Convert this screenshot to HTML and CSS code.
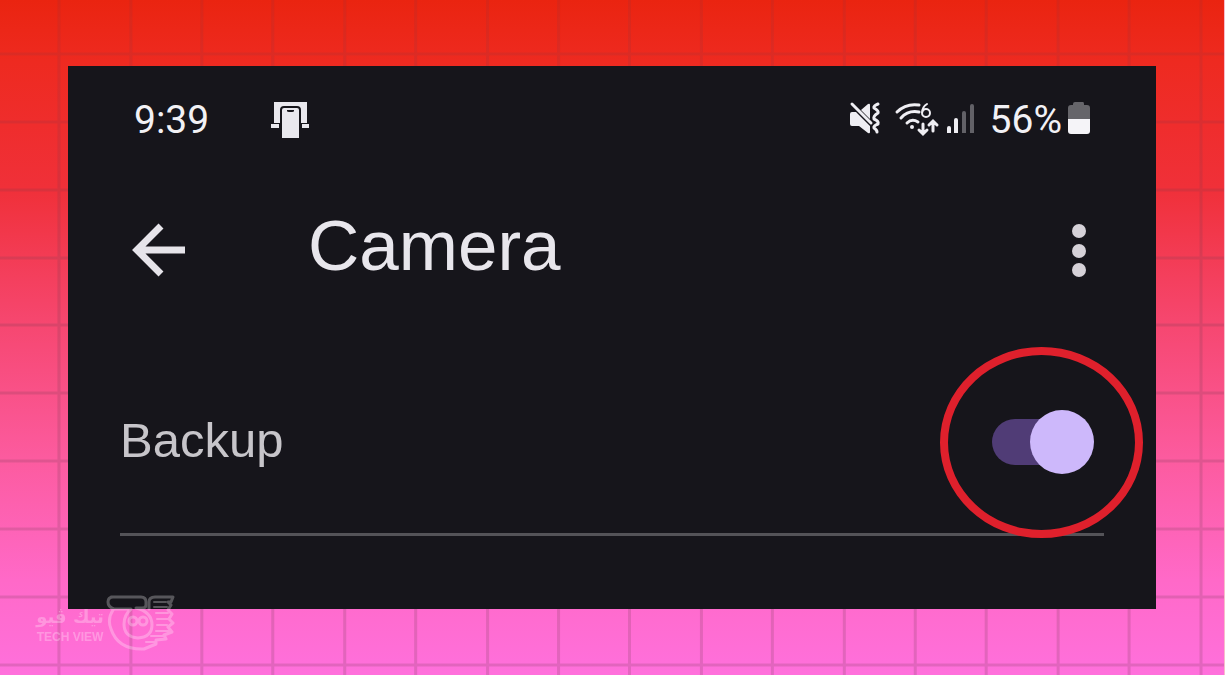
FILE: index.html
```
<!DOCTYPE html>
<html lang="en">
<head>
<meta charset="utf-8">
<meta name="viewport" content="width=device-width, initial-scale=1">
<title>Camera backup</title>
<link rel="stylesheet" href="styles.css">
</head>
<body>
<div class="stage">
  <svg class="grid" viewBox="0 0 1225 675" preserveAspectRatio="none" aria-hidden="true">
    <path d="M59 0V675M131 0V675M202 0V675M273 0V675M345 0V675M416 0V675M488 0V675M559 0V675M630 0V675M702 0V675M773 0V675M845 0V675M916 0V675M987 0V675M1059 0V675M1130 0V675M1202 0V675M0 54H1225M0 122H1225M0 190H1225M0 258H1225M0 325H1225M0 393H1225M0 461H1225M0 529H1225M0 597H1225M0 665H1225"/>
  </svg>
  <main class="panel">
    <div class="status">
      <div class="status-group status-left">
        <span class="status-text">9:39</span>
        <svg width="40" height="40" viewBox="0 0 40 40" fill="#e9e8ee" aria-hidden="true">
          <path d="M3 3H36V24H30V11Q30 7 26 7H13Q9 7 9 11V24H3Z"/>
          <path d="M0 25H8V29H0ZM31 25H38V29H31Z"/>
          <path d="M11 11Q11 9 13 9H26Q28 9 28 11V39H11Z"/>
          <path d="M16 11H23V12Q23 13 21 13H18Q16 13 16 12Z" fill="#16151b"/>
        </svg>
      </div>
      <div class="status-group status-right">
        <svg class="sound" width="34" height="36" viewBox="0 0 34 36" aria-hidden="true">
          <path d="M2 13Q2 11 4 11H8L22 25V31Q22 33 20 32L11 25H4Q2 25 2 23ZM13 9L20 3Q22 2 22 4V18Z" fill="#efeef3"/>
          <path d="M4 3L23 22" stroke="#efeef3" stroke-width="3" stroke-linecap="round"/>
          <path d="M30 3Q25 5 26 7Q31 10 30 12Q25 15 26 18Q31 20 30 23Q25 25 26 27Q29 29 29 31" fill="none" stroke="#efeef3" stroke-width="3" stroke-linecap="round" stroke-linejoin="round"/>
        </svg>
        <svg width="46" height="36" viewBox="0 0 46 36" fill="none" stroke="#efeef3" stroke-linecap="round" aria-hidden="true">
          <path d="M3 11Q12 2 25 4M7 17Q14 9 25 11M13 22Q18 17 24 21" stroke-width="3"/>
          <circle cx="18" cy="26" r="2" fill="#efeef3" stroke="none"/>
          <path d="M33 3Q28 6 28 12A4 4 0 1 0 32 8Q29 8 28 12" stroke-width="2"/>
          <path d="M29 23V32M25 29L29 33L33 29M39 30V21M35 24L39 20L43 24" stroke-width="3"/>
        </svg>
        <svg width="28" height="36" viewBox="0 0 28 36" fill="#efeef3" aria-hidden="true">
          <path d="M1 27Q1 25 3 25Q5 25 5 27V32H1ZM8 19Q8 17 10 17Q12 17 12 19V32H8Z"/>
          <path d="M16 12Q16 10 18 10Q20 10 20 12V32H16ZM24 5Q24 3 26 3Q28 3 28 5V32H24Z" fill="#626167"/>
        </svg>
        <span class="status-text percent">56%</span>
        <svg width="22" height="36" viewBox="0 0 22 36" aria-hidden="true">
          <path d="M0 18V7Q0 4 3 4H5V3Q5 1 7 1H15Q16 1 16 3V4H19Q22 4 22 7V18Z" fill="#66656a"/>
          <path d="M0 18H22V30Q22 33 19 33H3Q0 33 0 30Z" fill="#f5f4f8"/>
        </svg>
      </div>
    </div>
    <header class="appbar">
      <button class="icon-button back" type="button" aria-label="Back">
        <svg width="54" height="54" viewBox="0 0 54 54" fill="none" stroke="#e6e4ea" stroke-width="7" aria-hidden="true">
          <path d="M53 27H6M29 3L5 27L29 51"/>
        </svg>
      </button>
      <h1 class="title">Camera</h1>
      <button class="icon-button more" type="button" aria-label="More options">
        <svg width="14" height="54" viewBox="0 0 14 54" fill="#d5d1d8" aria-hidden="true">
          <circle cx="7" cy="8" r="7"/><circle cx="7" cy="28" r="7"/><circle cx="7" cy="47" r="7"/>
        </svg>
      </button>
    </header>
    <div class="setting">
      <label class="setting-label" for="backup">Backup</label>
      <span class="switch">
        <input class="switch-input" type="checkbox" role="switch" id="backup" checked>
        <span class="ring"></span>
      </span>
    </div>
  </main>
  <div class="watermark">
    <div class="brand">
      <span class="brand-ar" lang="ar" dir="rtl">تيك ڤيو</span>
      <span class="brand-en">TECH VIEW</span>
    </div>
    <svg width="70" height="56" viewBox="0 0 70 56" fill="none" stroke="#fff" stroke-width="3" stroke-linejoin="round" stroke-linecap="round" aria-hidden="true">
      <path d="M5 2H35Q40 2 40 7V10Q40 13 36 13H30Q46 17 46 30Q46 42 32 43Q18 42 18 29Q18 20 25 14H8Q2 12 2 7Q2 2 7 2"/>
      <path d="M43 14V7Q43 2 49 2H67L65 7H62L65 10L62 15L66 19L63 24L67 28L62 32L66 37L58 40L60 44L50 45L50 49L38 54Q12 55 5 34Q1 24 7 15"/>
      <path d="M48 7H60M48 12H61M50 18H62M51 24H62M51 30H61M50 36H63M45 41H57M40 47H50" stroke-width="2"/>
      <circle cx="27" cy="26" r="4"/><circle cx="37" cy="26" r="4"/>
    </svg>
  </div>
</div>
</body>
</html>
```
FILE: styles.css
```
* {
  box-sizing: border-box;
}

body {
  margin: 0;
  font-family: "Liberation Sans", Arial, sans-serif;
}

.stage {
  position: relative;
  min-height: 100vh;
  padding: 66px 68px;
  border-right: 1px solid #f7bccb;
  background: linear-gradient(#ea2410 0%, #ee2a20 9%, #f03039 28%, #f64770 48%, #fc5b9f 68%, #ff69c8 86%, #ff70dc 100%);
}

.grid {
  position: absolute;
  inset: 0;
  width: 100%;
  height: 100%;
  fill: none;
  stroke: rgb(110 60 80 / 20%);
  stroke-width: 3px;
  mask-image: linear-gradient(rgb(0 0 0 / 60%), #000 40%);
}

.panel {
  position: relative;
  padding: 29px 52px 73px;
  background: #16151b;
}

.status,
.status-group,
.appbar,
.setting {
  display: flex;
  align-items: center;
}

.status {
  justify-content: space-between;
  padding: 0 14px;
}

.status-left {
  gap: 62px;
}

.status-right {
  gap: 6px;
}

.sound {
  margin-right: 6px;
}

.status-text {
  padding-top: 2px;
  font-family: Roboto, sans-serif;
  font-size: 39px;
  line-height: 46px;
  color: #f2f1f5;
}

.percent {
  margin-left: 10px;
}

.status svg,
.appbar svg {
  display: block;
}

.appbar {
  margin-top: 63px;
  padding: 0 18px 0 12px;
}

.icon-button {
  padding: 0;
  border: 0;
  background: none;
}

.title {
  flex: 1;
  margin: 0 0 0 122px;
  padding-bottom: 8px;
  font-size: 71px;
  font-weight: 400;
  line-height: 80px;
  color: #e8e6ec;
}

.setting {
  justify-content: space-between;
  padding: 116px 10px 59px 0;
  border-bottom: 3px solid #545358;
}

.setting-label {
  padding-bottom: 4px;
  font-size: 49px;
  line-height: 60px;
  color: #c7c5ca;
}

.switch {
  position: relative;
  display: flex;
}

.switch-input {
  appearance: none;
  display: flex;
  align-items: center;
  width: 102px;
  height: 64px;
  margin: 0;
}

.switch-input::before {
  content: "";
  width: 70px;
  height: 46px;
  border-radius: 23px;
  background: #503c76;
}

.switch-input::after {
  content: "";
  width: 64px;
  height: 64px;
  margin-left: -32px;
  border-radius: 50%;
  background: #cdb8fb;
}

.ring {
  position: absolute;
  inset: -63px -49px -64px -52px;
  border: 8px solid #df202c;
  border-radius: 50%;
  pointer-events: none;
}

.watermark {
  position: absolute;
  left: 34px;
  bottom: 24px;
  display: flex;
  align-items: flex-end;
  opacity: 0.28;
  color: #fff;
}

.brand {
  display: flex;
  flex-direction: column;
  align-items: center;
  width: 72px;
  padding-bottom: 6px;
  font-weight: 700;
  white-space: nowrap;
}

.brand-ar {
  font-family: "DejaVu Sans", sans-serif;
  font-size: 18px;
  line-height: 24px;
}

.brand-en {
  font-size: 12px;
  line-height: 16px;
}
```
